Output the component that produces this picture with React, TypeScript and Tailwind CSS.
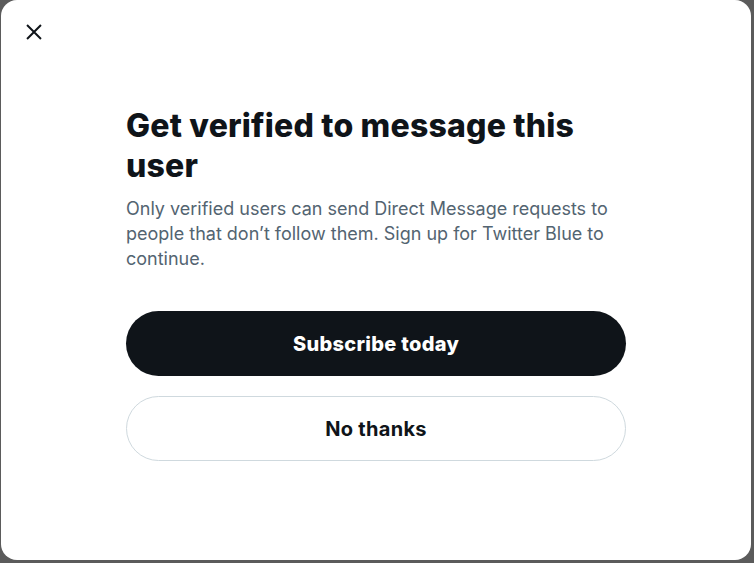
import React from "react";

export default function App() {
  return (
    <div className="w-[754px] h-[563px] bg-[#5b5b5b] pl-[1px] pr-[3px] pb-[3px] overflow-hidden" style={{ fontFamily: "Inter, 'Noto Sans', sans-serif" }}>
      <div className="relative w-[750px] h-[560px] bg-white rounded-[16px] flex flex-col">
        <div className="h-[106px] pl-[14px] pt-[13px]">
          <button className="w-[38px] h-[38px] flex items-center justify-center rounded-full text-[#0f1419]">
            <svg width="20" height="20" viewBox="0 0 24 24" fill="none" stroke="currentColor" strokeWidth="2.4" strokeLinecap="square">
              <path d="M4.5 4.5 L19.5 19.5 M19.5 4.5 L4.5 19.5" />
            </svg>
          </button>
        </div>
        <div className="ml-[125px] w-[500px] flex flex-col">
          <h1 className="text-[32px] leading-[40px] font-extrabold text-[#0f1419] tracking-[0.2px]">
            Get verified to message this user
          </h1>
          <p className="mt-[10px] text-[18px] leading-[25px] text-[#536471]">
            Only verified users can send Direct Message requests to people that don’t follow them. Sign up for Twitter Blue to continue.
          </p>
          <button className="mt-[40px] h-[65px] w-full rounded-full bg-[#0f1419] text-white text-[20px] font-extrabold tracking-[0.3px]">
            Subscribe today
          </button>
          <button className="mt-[20px] h-[65px] w-full rounded-full bg-white border border-[#cfd9de] text-[#0f1419] text-[20px] font-bold tracking-[0.3px]">
            No thanks
          </button>
        </div>
      </div>
    </div>
  );
}
